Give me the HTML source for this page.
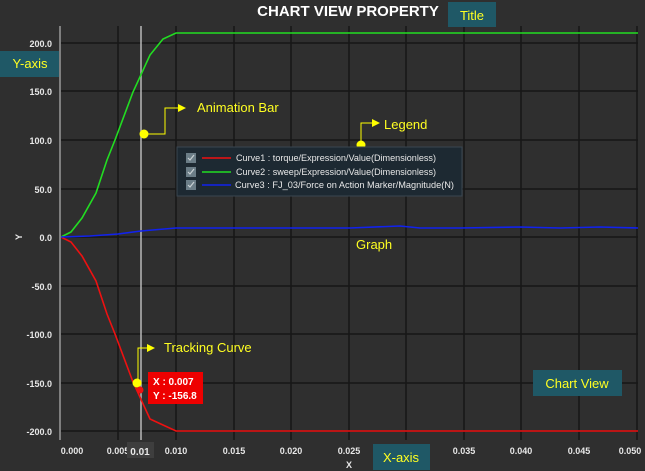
<!DOCTYPE html>
<html><head><style>
body{margin:0;width:645px;height:471px;background:#2f2f2f;overflow:hidden;font-family:"Liberation Sans",sans-serif}
</style></head><body>
<svg width="645" height="471" style="position:absolute;left:0;top:0" font-family="Liberation Sans, sans-serif">
<rect width="645" height="471" fill="#2f2f2f"/>
<g stroke="#161616" stroke-width="1.5">
<line x1="61" y1="43" x2="638" y2="43"/><line x1="61" y1="91" x2="638" y2="91"/><line x1="61" y1="140" x2="638" y2="140"/><line x1="61" y1="189" x2="638" y2="189"/><line x1="61" y1="237" x2="638" y2="237"/><line x1="61" y1="286" x2="638" y2="286"/><line x1="61" y1="334" x2="638" y2="334"/><line x1="61" y1="383" x2="638" y2="383"/><line x1="61" y1="431" x2="638" y2="431"/>
<line x1="118" y1="26" x2="118" y2="440"/><line x1="176" y1="26" x2="176" y2="440"/><line x1="234" y1="26" x2="234" y2="440"/><line x1="291" y1="26" x2="291" y2="440"/><line x1="349" y1="26" x2="349" y2="440"/><line x1="406" y1="26" x2="406" y2="440"/><line x1="464" y1="26" x2="464" y2="440"/><line x1="521" y1="26" x2="521" y2="440"/><line x1="579" y1="26" x2="579" y2="440"/><line x1="637" y1="26" x2="637" y2="440"/>
</g>
<line x1="60" y1="26" x2="60" y2="440" stroke="#9a9a9a" stroke-width="1.5"/>
<line x1="141" y1="26" x2="141" y2="440" stroke="#b8b8b8" stroke-width="1.5"/>
<polyline fill="none" stroke="#22dd22" stroke-width="1.6" points="61,237 71,232 82,218 96,193 107,160 115,140 133,92 150,55 163,39 176,33 638,33"/>
<polyline fill="none" stroke="#ee1111" stroke-width="1.6" points="61,237 71,242 82,256 96,281 107,314 115,334 133,382 150,419 163,425 176,431 638,431"/>
<polyline fill="none" stroke="#1122ee" stroke-width="1.6" points="61,237 90,236 118,234 141,231 176,228 230,228 300,228 350,228 400,226 420,228 460,228 520,227 560,228 600,227 638,228"/>
<g fill="#e8e8e8" font-size="9" font-weight="bold" text-anchor="end">
<text x="52" y="47">200.0</text><text x="52" y="95">150.0</text><text x="52" y="144">100.0</text><text x="52" y="193">50.0</text><text x="52" y="241">0.0</text><text x="52" y="290">-50.0</text><text x="52" y="338">-100.0</text><text x="52" y="387">-150.0</text><text x="52" y="435">-200.0</text>
</g>
<g fill="#e8e8e8" font-size="9" font-weight="bold" text-anchor="middle">
<text x="72" y="454">0.000</text><text x="118" y="454">0.005</text><text x="176" y="454">0.010</text><text x="234" y="454">0.015</text><text x="291" y="454">0.020</text><text x="349" y="454">0.025</text><text x="464" y="454">0.035</text><text x="521" y="454">0.040</text><text x="579" y="454">0.045</text><text x="630" y="454">0.050</text>
<text x="349" y="468">X</text>
<text x="22" y="237" transform="rotate(-90 22 237)">Y</text>
</g>
<rect x="127" y="442" width="27" height="16" fill="#3e3e3e"/>
<text x="140" y="455" fill="#e8e8e8" font-size="10" font-weight="bold" text-anchor="middle">0.01</text>
<text x="348" y="16" fill="#fff" font-size="15" font-weight="bold" text-anchor="middle">CHART VIEW PROPERTY</text>
<g fill="#1f5866"><rect x="448" y="2" width="48" height="25"/><rect x="0" y="51" width="59" height="26"/><rect x="533" y="370" width="89" height="26"/><rect x="373" y="444" width="57" height="26"/></g>
<g fill="#ffff22" font-size="13"><text x="472" y="20" text-anchor="middle">Title</text><text x="30" y="68" text-anchor="middle">Y-axis</text><text x="577" y="388" text-anchor="middle">Chart View</text><text x="401" y="462" text-anchor="middle">X-axis</text>
<text x="197" y="112">Animation  Bar</text><text x="384" y="129">Legend</text><text x="356" y="249">Graph</text><text x="164" y="352">Tracking Curve</text></g>
<g stroke="#ffff00" stroke-width="1" fill="none"><polyline points="144,134 165,134 165,108 178,108"/><polyline points="361,145 361,123 372,123"/><polyline points="138,382 138,348 147,348"/></g>
<g fill="#ffff00"><circle cx="144" cy="134" r="4.5"/><circle cx="361" cy="145" r="4.5"/><circle cx="137" cy="383" r="4.5"/><polygon points="178,104 186,108 178,112"/><polygon points="372,119 380,123 372,127"/><polygon points="147,344 155,348 147,352"/></g>
<circle cx="140" cy="390" r="3.5" fill="#ee1111"/>
<rect x="148" y="372" width="55" height="32" fill="#ee0000"/>
<g fill="#fff" font-size="10" font-weight="bold"><text x="153" y="385">X : 0.007</text><text x="153" y="399">Y : -156.8</text></g>
<rect x="177" y="147" width="285" height="49" fill="#1d2932" stroke="#3a4650"/>
<g fill="#6b7d87"><rect x="186" y="153" width="10" height="10"/><rect x="186" y="167" width="10" height="10"/><rect x="186" y="180" width="10" height="10"/></g>
<g stroke="#c8d0d4" stroke-width="1.2" fill="none"><polyline points="188,158 190,160 194,155"/><polyline points="188,172 190,174 194,169"/><polyline points="188,185 190,187 194,182"/></g>
<g stroke-width="1.6"><line x1="202" y1="158" x2="231" y2="158" stroke="#ee1111"/><line x1="202" y1="172" x2="231" y2="172" stroke="#22dd22"/><line x1="202" y1="185" x2="231" y2="185" stroke="#1122ee"/></g>
<g fill="#e8e8e8" font-size="9.5"><text x="236" y="161" textLength="200" lengthAdjust="spacingAndGlyphs">Curve1 : torque/Expression/Value(Dimensionless)</text><text x="236" y="175" textLength="200" lengthAdjust="spacingAndGlyphs">Curve2 : sweep/Expression/Value(Dimensionless)</text><text x="235" y="188" textLength="219" lengthAdjust="spacingAndGlyphs">Curve3 : FJ_03/Force on Action Marker/Magnitude(N)</text></g>
</svg>
</body></html>
